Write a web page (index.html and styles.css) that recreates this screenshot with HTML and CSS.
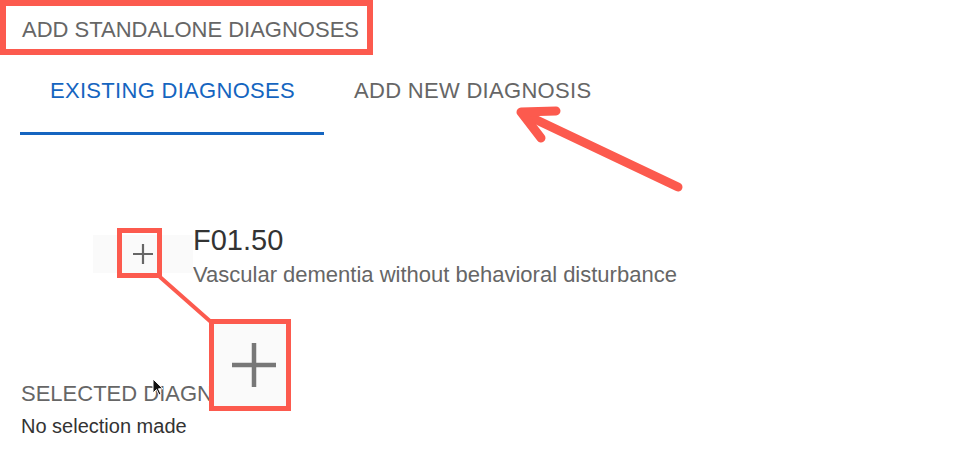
FILE: index.html
```html
<!DOCTYPE html>
<html lang="en">
<head>
  <meta charset="UTF-8">
  <title>Add Standalone Diagnoses</title>
  <link rel="stylesheet" href="styles.css">
</head>
<body>
  <div class="page">
    <!-- Dialog title, outlined by the annotation -->
    <h1 class="dialog-title callout">ADD STANDALONE DIAGNOSES</h1>

    <!-- Tabs -->
    <div class="tabs">
      <div class="tab active">EXISTING DIAGNOSES</div>
      <div class="tab">ADD NEW DIAGNOSIS</div>
    </div>

    <!-- Diagnosis list -->
    <div class="diagnosis-row">
      <div class="add-btn">
        <svg class="plus" width="22" height="22" viewBox="0 0 22 22">
          <path d="M11 1v20M1 11h20" stroke="#666" stroke-width="2.2" fill="none"/>
        </svg>
        <span class="callout-square"></span>
      </div>
      <div class="diagnosis-text">
        <div class="code">F01.50</div>
        <div class="desc">Vascular dementia without behavioral disturbance</div>
      </div>
    </div>

    <div class="selected">
      <div class="selected-title">SELECTED DIAGNOSES</div>
      <div class="selected-empty">No selection made</div>
    </div>

    <!-- Magnified plus -->
    <div class="magnifier">
      <svg width="46" height="46" viewBox="0 0 46 46">
        <path d="M23 1v44M1 23h44" stroke="#777" stroke-width="4.5" fill="none"/>
      </svg>
    </div>

    <!-- Annotation arrow and connector -->
    <svg class="annotations" width="954" height="462" viewBox="0 0 954 462">
      <g stroke="#fc5a4e" stroke-linecap="round" stroke-linejoin="round" fill="none">
        <path d="M678 187L524 114" stroke-width="9"/>
        <path d="M556 111L521 112L541 138" stroke-width="9"/>
        <path d="M160 277L211 322" stroke-width="4"/>
      </g>
    </svg>

    <!-- Mouse pointer -->
    <svg class="pointer" width="12" height="18" viewBox="0 0 12 18">
      <path d="M1 1v14l3.5-3.5 2.5 5.5 2-1-2.5-5.2H11z" fill="#111" stroke="#fff" stroke-width="1"/>
    </svg>
  </div>
</body>
</html>
```

FILE: styles.css
```css
/* General */
body {
  margin: 0;
  background-color: #fff;
  font-family: "Liberation Sans", Arial, sans-serif;
  color: #333;
}

.page {
  position: relative;
  width: 954px;
  height: 462px;
  overflow: hidden;
}

/* Title */
.dialog-title {
  display: inline-block;
  margin: 0;
  padding: 11px 8px 6px 16px;
  font-size: 22px;
  font-weight: normal;
  line-height: 26px;
  color: #666;
}

.callout {
  border: 6px solid #fc5a4e;
}

/* Tabs */
.tabs {
  display: flex;
  margin-left: 20px;
}

.tab {
  padding: 23px 29px 28px 30px;
  font-size: 22px;
  line-height: 26px;
  letter-spacing: 0.3px;
  color: #666;
  border-bottom: 3px solid transparent;
}

.tab.active {
  color: #1565c0;
  border-bottom-color: #1565c0;
}

/* Diagnosis row */
.diagnosis-row {
  display: flex;
  align-items: flex-start;
  margin: 89px 0 0 93px;
}

.add-btn {
  position: relative;
  display: flex;
  align-items: center;
  justify-content: center;
  width: 100px;
  height: 38px;
  margin-top: 11px;
  background-color: #fafafa;
}

.callout-square {
  position: absolute;
  left: 24px;
  top: -7px;
  width: 35px;
  height: 40px;
  border: 5px solid #fc5a4e;
}

.code {
  font-size: 29px;
  line-height: 33px;
  color: #333;
}

.desc {
  margin-top: 5px;
  font-size: 22px;
  line-height: 26px;
  color: #666;
}

/* Selected section */
.selected {
  margin: 93px 0 0 21px;
}

.selected-title {
  font-size: 22px;
  line-height: 26px;
  color: #666;
}

.selected-empty {
  margin-top: 7px;
  font-size: 20px;
  line-height: 24px;
  color: #333;
}

/* Overlays */
.magnifier {
  position: absolute;
  left: 209px;
  top: 319px;
  width: 72px;
  height: 82px;
  display: flex;
  align-items: center;
  justify-content: center;
  background-color: #fafafa;
  border: 5px solid #fc5a4e;
}

.magnifier svg {
  margin-left: 8px;
}

.annotations {
  position: absolute;
  left: 0;
  top: 0;
  pointer-events: none;
}

.pointer {
  position: absolute;
  left: 152px;
  top: 378px;
}
```
